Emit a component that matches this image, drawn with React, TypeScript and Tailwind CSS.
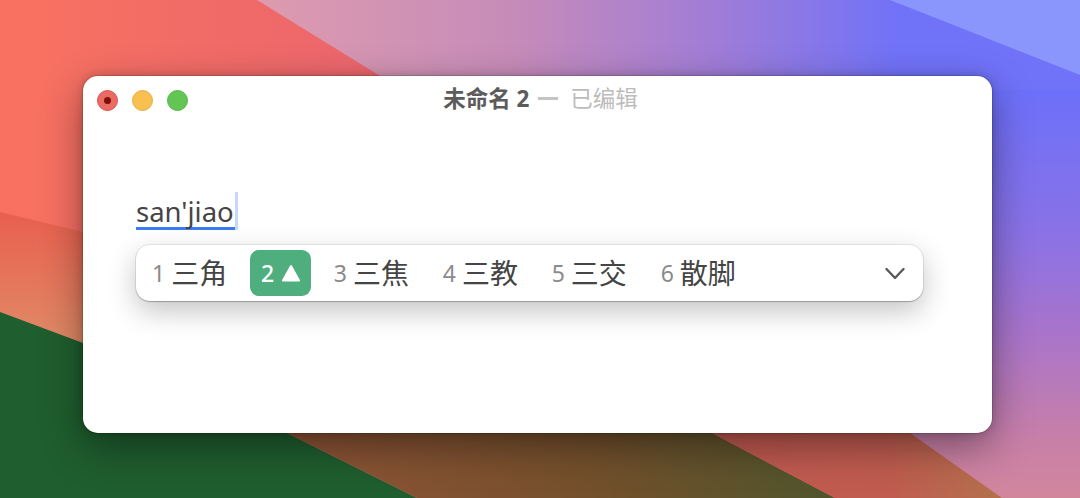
import React from 'react';

const candidates = [
  { n: '1', text: '三角' },
  { n: '2', text: '', active: true },
  { n: '3', text: '三焦' },
  { n: '4', text: '三教' },
  { n: '5', text: '三交' },
  { n: '6', text: '散脚' },
];

// the desktop picture behind the window
const Wallpaper = () => (
  <svg className="absolute inset-0" width="1080" height="498" viewBox="0 0 1080 498">
    <defs>
      <linearGradient id="coral" gradientUnits="userSpaceOnUse" x1="0" y1="0" x2="400" y2="0">
        <stop offset="0" stopColor="#f97260" />
        <stop offset="1" stopColor="#ea656e" />
      </linearGradient>
      <linearGradient id="purple" gradientUnits="userSpaceOnUse" x1="260" y1="0" x2="900" y2="0">
        <stop offset="0" stopColor="#dd9bae" />
        <stop offset="0.4" stopColor="#c68bb9" />
        <stop offset="0.7" stopColor="#a27dd6" />
        <stop offset="1" stopColor="#7072f8" />
      </linearGradient>
      <linearGradient id="rightFade" gradientUnits="userSpaceOnUse" x1="0" y1="90" x2="0" y2="498">
        <stop offset="0" stopColor="#6c70fa" />
        <stop offset="0.35" stopColor="#8a72e6" />
        <stop offset="0.6" stopColor="#a974ca" />
        <stop offset="0.85" stopColor="#c77fa8" />
        <stop offset="1" stopColor="#d2869c" />
      </linearGradient>
      <linearGradient id="band" gradientUnits="userSpaceOnUse" x1="0" y1="215" x2="0" y2="340">
        <stop offset="0" stopColor="#e9604f" />
        <stop offset="1" stopColor="#e08a66" />
      </linearGradient>
      <linearGradient id="brown" gradientUnits="userSpaceOnUse" x1="300" y1="0" x2="830" y2="0">
        <stop offset="0" stopColor="#8f5436" />
        <stop offset="0.55" stopColor="#74502c" />
        <stop offset="1" stopColor="#50552c" />
      </linearGradient>
      <linearGradient id="red" gradientUnits="userSpaceOnUse" x1="720" y1="0" x2="1000" y2="0">
        <stop offset="0" stopColor="#c25a50" />
        <stop offset="0.6" stopColor="#c05c50" />
        <stop offset="1" stopColor="#b4704c" />
      </linearGradient>
    </defs>
    <rect width="1080" height="498" fill="url(#coral)" />
    <polygon points="257,0 1080,0 1080,498 1002,498 910,433 500,150" fill="url(#purple)" />
    <polygon points="900,90 1080,90 1080,498 900,498" fill="url(#rightFade)" />
    <polygon points="890,0 1080,0 1080,75" fill="#8a96fb" />
    <polygon points="0,212 83,232 300,300 287,498 0,498" fill="url(#band)" />
    <polygon points="0,312 83,343 287,433 417,498 0,498" fill="#1f5e2e" />
    <polygon points="287,433 712,433 835,498 417,498" fill="url(#brown)" />
    <polygon points="712,433 910,433 1002,498 835,498" fill="url(#red)" />
  </svg>
);

const TitleBar = () => (
  <div className="grid grid-cols-[1fr_auto_1fr] items-center h-[48px] pl-[14px]">
    <div className="flex items-center gap-[14px]">
      <div className="flex w-[21px] h-[21px] items-center justify-center rounded-full bg-[#ea6a64] border border-[#d9534f]">
        <div className="w-[7px] h-[7px] rounded-full bg-[#7a1008]" />
      </div>
      <div className="w-[21px] h-[21px] rounded-full bg-[#f7c050] border border-[#e8ae42]" />
      <div className="w-[21px] h-[21px] rounded-full bg-[#62c554] border border-[#56b548]" />
    </div>
    <div className="flex items-center text-[22.5px] leading-[28px] pr-[8px] -mt-[3px]">
      <span className="font-bold text-[#5c5c5c]">未命名 2</span>
      <span className="ml-[9px] w-[20px] h-[3px] bg-[#c4c4c4]" />
      <span className="ml-[12px] text-[#bcbcbc]">已编辑</span>
    </div>
    <div />
  </div>
);

const CandidateBar = () => (
  <div className="flex items-center justify-between h-[56px] pl-[5px] pr-[18px] bg-white rounded-[14px] shadow-[0_1px_1px_rgba(0,0,0,0.22),0_0_0_1px_rgba(0,0,0,0.07),0_10px_28px_rgba(0,0,0,0.24)]">
    <div className="flex items-center gap-[11.8px]">
      {candidates.map((c) =>
        c.active ? (
          <div key={c.n} className="flex items-center h-[46px] w-[61px] pl-[11px] rounded-[9px] bg-[#4fae7e]">
            <span className="w-[12px] text-[23px] font-medium text-white">{c.n}</span>
            <svg className="ml-[8px] -mt-[1px]" width="20" height="20" viewBox="0 0 20 20">
              <path d="M10 3 L18 17.5 H2 Z" fill="#fff" stroke="#fff" strokeWidth="2" strokeLinejoin="round" />
            </svg>
          </div>
        ) : (
          <div key={c.n} className="flex items-center h-[46px] px-[11px]">
            <span className="text-[23px] text-[#8a8a8a]">{c.n}</span>
            <span className="ml-[6px] text-[28px] text-[#454545]">{c.text}</span>
          </div>
        ),
      )}
    </div>
    <svg width="20" height="13" viewBox="0 0 20 13" fill="none">
      <path d="M1.5 2 L10 11 L18.5 2" stroke="#5a5a5a" strokeWidth="2.4" strokeLinecap="round" strokeLinejoin="round" />
    </svg>
  </div>
);

export default function App() {
  return (
    <div className="relative w-[1080px] h-[498px] overflow-hidden font-['Noto_Sans','Noto_Sans_CJK_SC',sans-serif]">
      <Wallpaper />
      <div className="absolute left-[83px] top-[76px] w-[909px] h-[357px] bg-white rounded-[15px] shadow-[0_0_0_1px_rgba(0,0,0,0.12),0_0_10px_rgba(0,0,0,0.18),0_14px_40px_rgba(0,0,0,0.4)]">
        <TitleBar />
        <div className="px-[53px] pr-[69px] pt-[68px]">
          <div className="relative w-fit h-[38px]">
            <div className="border-b-[3px] border-[#3b7bf0] h-[38px] leading-[40px] text-[27.5px] text-[#454545] pr-[1px]">
              san'jiao
            </div>
            <div className="absolute -right-[3px] top-0 w-[3px] h-[38px] bg-[#c6d9fc]" />
          </div>
          <div className="mt-[15px]">
            <CandidateBar />
          </div>
        </div>
      </div>
    </div>
  );
}
